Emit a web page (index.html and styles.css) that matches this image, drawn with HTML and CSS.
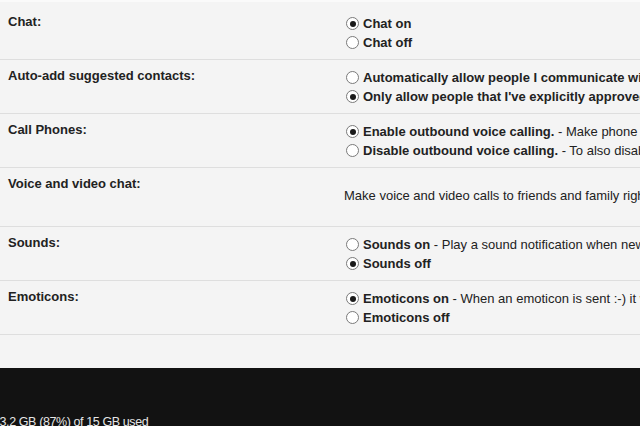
FILE: index.html
```html
<!DOCTYPE html>
<html lang="en">
<head>
    <meta charset="UTF-8">
    <meta name="viewport" content="width=device-width, initial-scale=1.0">
    <title>Chat settings</title>
    <link rel="stylesheet" href="styles.css">
</head>
<body>
    <div class="top-strip"></div>

    <!-- Chat settings -->
    <div class="settings">
        <div class="row">
            <div class="label">Chat:</div>
            <div class="options">
                <div class="opt"><span class="radio checked"></span><b>Chat on</b></div>
                <div class="opt"><span class="radio"></span><b>Chat off</b></div>
            </div>
        </div>

        <div class="row">
            <div class="label">Auto-add suggested contacts:</div>
            <div class="options">
                <div class="opt"><span class="radio"></span><b>Automatically allow people I communicate with often to chat with me and see when I'm online</b></div>
                <div class="opt"><span class="radio checked"></span><b>Only allow people that I've explicitly approved to chat with me and see when I'm online</b></div>
            </div>
        </div>

        <div class="row">
            <div class="label">Call Phones:</div>
            <div class="options">
                <div class="opt"><span class="radio checked"></span><b>Enable outbound voice calling.</b>&nbsp;- Make phone calls to landlines and mobiles from Gmail.</div>
                <div class="opt"><span class="radio"></span><b>Disable outbound voice calling.</b>&nbsp;- To also disable incoming calls, turn off voice and video chat.</div>
            </div>
        </div>

        <div class="row">
            <div class="label">Voice and video chat:</div>
            <div class="options">
                <p class="note">Make voice and video calls to friends and family right from your computer.</p>
            </div>
        </div>

        <div class="row">
            <div class="label">Sounds:</div>
            <div class="options">
                <div class="opt"><span class="radio"></span><b>Sounds on</b>&nbsp;- Play a sound notification when new chat messages arrive.</div>
                <div class="opt"><span class="radio checked"></span><b>Sounds off</b></div>
            </div>
        </div>

        <div class="row">
            <div class="label">Emoticons:</div>
            <div class="options">
                <div class="opt"><span class="radio checked"></span><b>Emoticons on</b>&nbsp;- When an emoticon is sent :-) it will be shown as an animated picture.</div>
                <div class="opt"><span class="radio"></span><b>Emoticons off</b></div>
            </div>
        </div>
    </div>

    <!-- Storage footer -->
    <div class="footer">
        <span class="usage">13.2 GB (87%) of 15 GB used</span>
    </div>
</body>
</html>
```

FILE: styles.css
```css
html, body {
    margin: 0;
    padding: 0;
    overflow: hidden;
}

body {
    font-family: 'Liberation Sans', Arial, sans-serif;
    font-size: 13px;
    color: #222;
    background-color: #f4f4f4;
    width: 640px;
    height: 426px;
}

.top-strip {
    height: 2px;
    background-color: #fafafa;
}

.settings {
    padding-top: 4px;
    padding-bottom: 33px;
}

.row {
    display: grid;
    grid-template-columns: 336px 1fr;
    padding: 8px 0 7px 8px;
    border-bottom: 1px solid #dedede;
    white-space: nowrap;
}

.label {
    font-weight: bold;
    line-height: 16px;
}

.options {
    overflow: hidden;
}

.opt {
    display: flex;
    align-items: center;
    height: 19px;
    line-height: 19px;
}

.radio {
    flex: none;
    box-sizing: border-box;
    width: 13px;
    height: 13px;
    margin: 0 4px 0 2px;
    border: 1px solid #7a7a7a;
    border-radius: 50%;
    background-color: #fff;
    display: flex;
    align-items: center;
    justify-content: center;
}

.radio.checked::after {
    content: "";
    width: 6px;
    height: 6px;
    border-radius: 50%;
    background-color: #1a1a1a;
}

.note {
    margin: 12px 0 15px;
    line-height: 16px;
}

.footer {
    background-color: #121212;
    height: 58px;
    padding-top: 46px;
    box-sizing: border-box;
    white-space: nowrap;
}

.usage {
    display: inline-block;
    margin-left: -7px;
    color: #e6e6e6;
    font-size: 12.5px;
    letter-spacing: -0.4px;
    line-height: 16px;
}
```
